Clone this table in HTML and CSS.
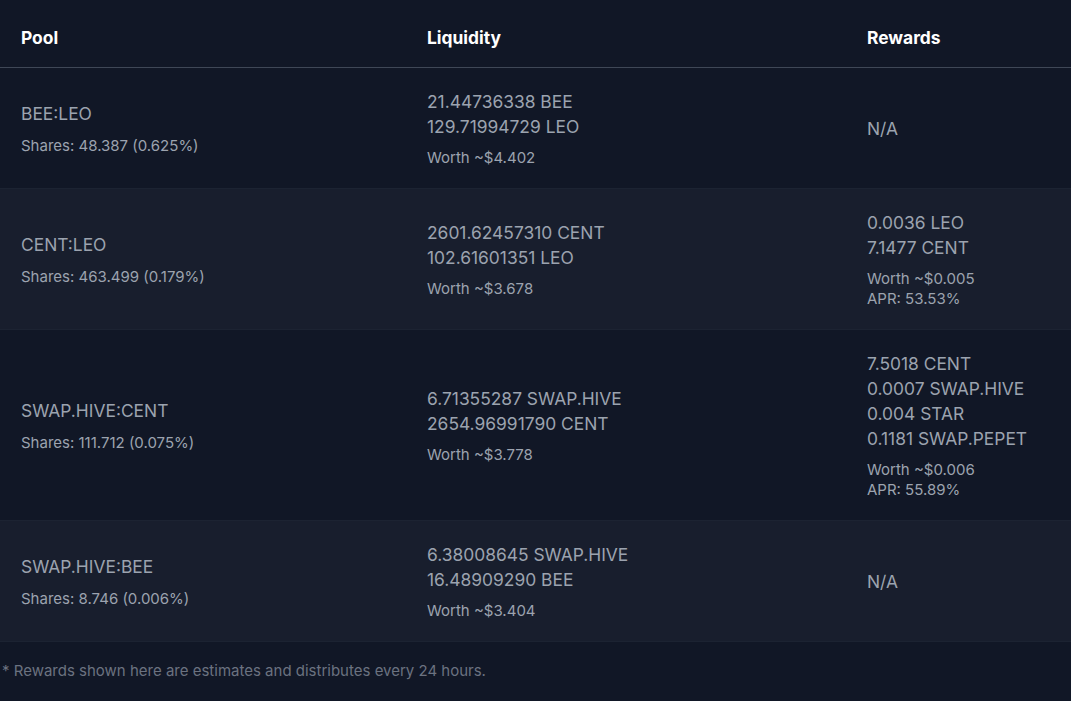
FILE: index.html
```html
<!DOCTYPE html>
<html lang="en">
<head>
<meta charset="utf-8">
<title>Pools</title>
<link rel="stylesheet" href="styles.css">
</head>
<body>
<div class="wrap">
  <table class="pools">
    <colgroup>
      <col class="c-pool">
      <col class="c-liq">
      <col class="c-rew">
    </colgroup>
    <thead>
      <tr>
        <th>Pool</th>
        <th>Liquidity</th>
        <th>Rewards</th>
      </tr>
    </thead>
    <tbody>
      <tr class="dark">
        <td class="pool">
          <div class="name">BEE:LEO</div>
          <div class="sub">Shares: 48.387 (0.625%)</div>
        </td>
        <td>
          <div class="amt">21.44736338 BEE</div>
          <div class="amt">129.71994729 LEO</div>
          <div class="sub">Worth ~$4.402</div>
        </td>
        <td><div class="amt">N/A</div></td>
      </tr>
      <tr class="light">
        <td class="pool">
          <div class="name">CENT:LEO</div>
          <div class="sub">Shares: 463.499 (0.179%)</div>
        </td>
        <td>
          <div class="amt">2601.62457310 CENT</div>
          <div class="amt">102.61601351 LEO</div>
          <div class="sub">Worth ~$3.678</div>
        </td>
        <td>
          <div class="amt">0.0036 LEO</div>
          <div class="amt">7.1477 CENT</div>
          <div class="sub">Worth ~$0.005</div>
          <div class="apr">APR: 53.53%</div>
        </td>
      </tr>
      <tr class="dark">
        <td class="pool">
          <div class="name">SWAP.HIVE:CENT</div>
          <div class="sub">Shares: 111.712 (0.075%)</div>
        </td>
        <td>
          <div class="amt">6.71355287 SWAP.HIVE</div>
          <div class="amt">2654.96991790 CENT</div>
          <div class="sub">Worth ~$3.778</div>
        </td>
        <td>
          <div class="amt">7.5018 CENT</div>
          <div class="amt">0.0007 SWAP.HIVE</div>
          <div class="amt">0.004 STAR</div>
          <div class="amt">0.1181 SWAP.PEPET</div>
          <div class="sub">Worth ~$0.006</div>
          <div class="apr">APR: 55.89%</div>
        </td>
      </tr>
      <tr class="light">
        <td class="pool">
          <div class="name">SWAP.HIVE:BEE</div>
          <div class="sub">Shares: 8.746 (0.006%)</div>
        </td>
        <td>
          <div class="amt">6.38008645 SWAP.HIVE</div>
          <div class="amt">16.48909290 BEE</div>
          <div class="sub">Worth ~$3.404</div>
        </td>
        <td><div class="amt">N/A</div></td>
      </tr>
    </tbody>
  </table>
  <p class="note">* Rewards shown here are estimates and distributes every 24 hours.</p>
</div>
</body>
</html>
```

FILE: styles.css
```css
html, body {
  margin: 0;
  padding: 0;
  background: #111726;
}

body {
  font-family: Inter, "Noto Sans", sans-serif;
  color: #9ca3af;
  width: 1071px;
  height: 701px;
  overflow: hidden;
}

.wrap {
  display: flex;
  flex-direction: column;
}

.pools {
  width: 1071px;
  border-collapse: collapse;
  table-layout: fixed;
}

.c-pool { width: 406px; }
.c-liq { width: 440px; }
.c-rew { width: 225px; }

.pools th {
  text-align: left;
  color: #ffffff;
  font-size: 17.4px;
  font-weight: 700;
  height: 67px;
  padding: 8px 0 0 21px;
  border-bottom: 1px solid #3f4756;
  box-sizing: border-box;
  vertical-align: middle;
}

.pools td {
  padding: 21px 0 20px 21px;
  vertical-align: middle;
  border-bottom: 1px solid #1c2332;
}

.dark { background: #111726; }
.light { background: #181e2d; }

.name {
  font-size: 17.4px;
  line-height: 25px;
}

.amt {
  font-size: 17.4px;
  line-height: 25px;
}

.sub {
  font-size: 15px;
  line-height: 21px;
  margin-top: 8px;
}

.pool .sub {
  margin-top: 9px;
}

.apr {
  font-size: 15px;
  line-height: 20px;
}

.note {
  margin: 0;
  padding: 19px 0 0 2px;
  font-size: 15px;
  line-height: 20px;
  color: #6b7280;
}
```
